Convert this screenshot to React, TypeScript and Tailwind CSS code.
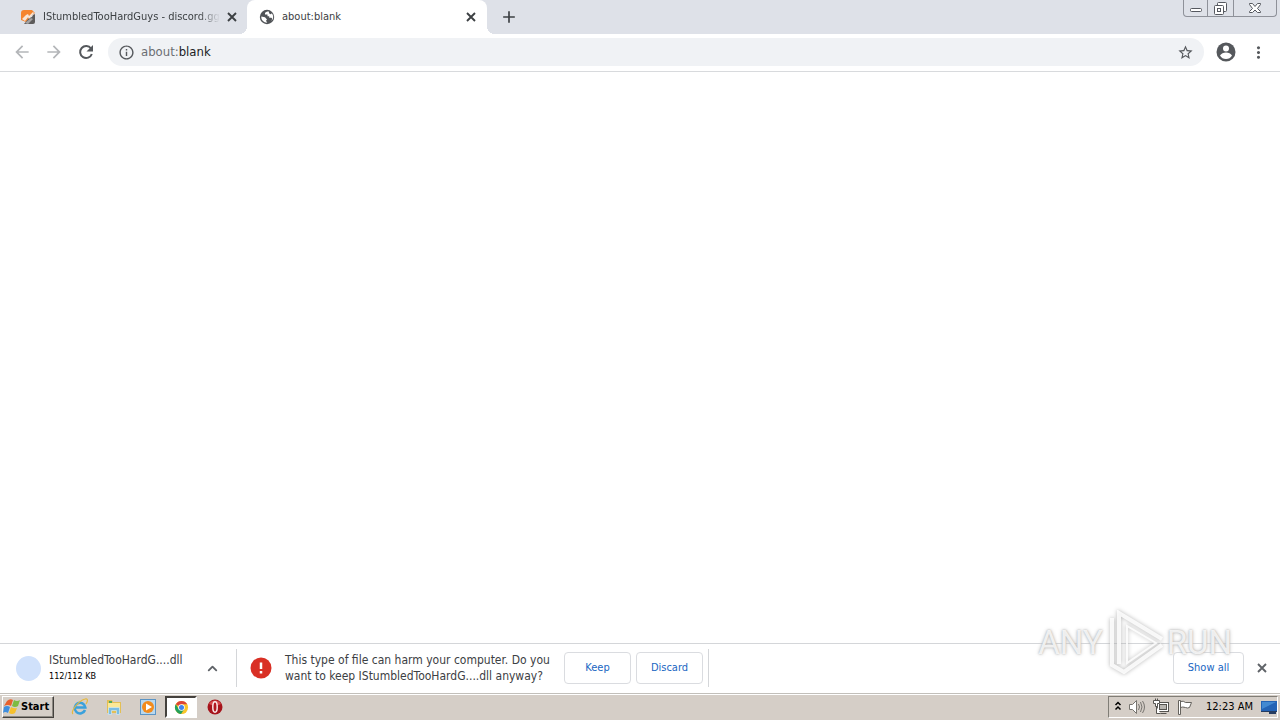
import type { ReactNode } from "react";
import { ChevronUp } from "lucide-react";
import { MdArrowBack, MdArrowForward, MdMoreVert, MdStarBorder, MdAdd, MdInfoOutline } from "react-icons/md";

const UI_FONT = "font-['DejaVu_Sans_Condensed','DejaVu_Sans',sans-serif]";

function SiteIcon() {
    return (
        <svg viewBox="0 0 16 16" className="h-4 w-4 shrink-0">
            <path d="M1 4q0-3 3-3h8l3 3-4 3-5 6-5-2z" fill="#f5852f" />
            <path d="M15 5v8q0 2-2 2H4l5-6 3-1 1-2z" fill="#5d5b5b" />
            <path d="M2 10l4-4 2-1 1 2-4 5zM8 8l5-5 1 1-5 6z" fill="#f7e6d8" />
            <path d="M5 14l6-5 2 1-5 5z" fill="#a5a3a3" />
        </svg>
    );
}

function GlobeIcon() {
    return (
        <svg viewBox="0 0 16 16" className="h-4 w-4 shrink-0">
            <circle cx="8" cy="8" r="7.200" fill="#505357" />
            <path d="M9.500 2.300c-2.500.2-4 1.700-3.500 3.200h2.500v1.700h1.700v1.600h2.200c1 .5.800 2-.2 3.200 2.500-2 2.600-5.500.6-7.800-.7 1.300-1.700 1-2.300.5z" fill="white" />
            <path d="M2.300 7.500 6 8.300l2 2.200-1 1.300 1.300 2C4.500 13.500 2 11 2.300 7.500z" fill="white" />
        </svg>
    );
}

function CloseIcon() {
    return (
        <svg viewBox="0 0 16 16" className="h-4 w-4" stroke="currentColor" strokeWidth="1.900">
            <path d="M4 4l8 8M12 4l-8 8" />
        </svg>
    );
}

function ReloadIcon() {
    return (
        <svg viewBox="0 0 20 20" className="h-5 w-5" fill="none" stroke="currentColor" strokeWidth="2">
            <path d="M15 6.500A6 6 0 1 0 15.800 12" />
            <path d="M17 3v6.500h-6.500z" fill="currentColor" stroke="none" />
        </svg>
    );
}

function ProfileIcon() {
    return (
        <svg viewBox="0 0 20 20" className="h-5 w-5">
            <circle cx="10" cy="10" r="9.500" fill="#55585c" />
            <circle cx="10" cy="6.500" r="3" fill="white" />
            <path d="M4 13.500q2-3 6-3t6 3q-2 3.500-6 3.500t-6-3.500z" fill="white" />
        </svg>
    );
}

function TabStrip() {
    return (
        <header className="flex h-[34px] bg-[#dee1e8]">
            <div className="flex w-[247px] items-center pl-5 pr-[7px]">
                <SiteIcon />
                <span className="ml-[7px] w-[177px] overflow-hidden whitespace-nowrap text-[11px] text-[#3c4043] [mask-image:linear-gradient(to_right,black_88%,transparent)]">
                    IStumbledTooHardGuys - discord.gg
                </span>
                <button aria-label="Close tab" className="ml-1 text-[#3c4043]"><CloseIcon /></button>
            </div>
            <div className="relative flex w-60 items-center rounded-t-lg bg-white pl-3 pr-2">
                <span className="absolute -left-2 bottom-0 h-2 w-2 bg-[radial-gradient(circle_at_0_0,transparent_8px,white_8px)]" />
                <span className="absolute -right-2 bottom-0 h-2 w-2 bg-[radial-gradient(circle_at_100%_0,transparent_8px,white_8px)]" />
                <GlobeIcon />
                <span className="ml-[7px] flex-1 text-[11px] text-[#3c4043]">about:blank</span>
                <button aria-label="Close tab" className="text-[#3c4043]"><CloseIcon /></button>
            </div>
            <button aria-label="New tab" className="ml-3 text-[#3c4043]"><MdAdd size={20} /></button>
            <div className="ml-auto mr-[3px] flex h-[17px] overflow-hidden rounded-b border border-t-0 border-[#8e9199] text-[#55585f]">
                <button aria-label="Minimize" className="flex w-6 justify-center border-r border-[#8e9199]">
                    <svg viewBox="0 0 24 17" className="h-[17px] w-6 shrink-0" fill="white" stroke="currentColor">
                        <rect x="6.500" y="8.500" width="11" height="3" rx="1" />
                    </svg>
                </button>
                <button aria-label="Restore" className="flex w-[26px] justify-center border-r border-[#8e9199]">
                    <svg viewBox="0 0 24 17" className="h-[17px] w-6 shrink-0" fill="white" stroke="currentColor">
                        <rect x="8.500" y="2.500" width="9" height="9" rx="1" />
                        <rect x="5.500" y="5.500" width="9" height="9" rx="1" />
                        <rect x="8.500" y="8.500" width="3" height="3" />
                    </svg>
                </button>
                <button aria-label="Close" className="flex w-[42px] justify-center">
                    <svg viewBox="0 0 24 17" className="h-[17px] w-6 shrink-0" fill="white" stroke="currentColor">
                        <path d="M6.500 3.500h3l2.500 3 2.500-3h3v1l-3 4 3 3v1h-3l-2.500-2.500-2.500 2.500h-3v-1l3-3-3-4z" />
                    </svg>
                </button>
            </div>
        </header>
    );
}

function Toolbar() {
    return (
        <nav className="flex h-[38px] items-center border-b border-[#d8dadd] pb-px text-[#55585c]">
            <button aria-label="Back" className="ml-3 text-[#b4b6b9]"><MdArrowBack size={20} /></button>
            <button aria-label="Forward" className="ml-3 text-[#b4b6b9]"><MdArrowForward size={20} /></button>
            <button aria-label="Reload" className="ml-3"><ReloadIcon /></button>
            <div className="ml-3 flex h-7 flex-1 items-center rounded-full bg-[#f0f2f5] pl-[10px] pr-[10px]">
                <MdInfoOutline size={17} />
                <span className="ml-[6px] flex-1 text-[13px] text-[#6b6e73]">
                    about:<span className="text-[#202124]">blank</span>
                </span>
                <button aria-label="Bookmark this tab"><MdStarBorder size={17} /></button>
            </div>
            <button aria-label="Profile" className="ml-3"><ProfileIcon /></button>
            <button aria-label="Menu" className="ml-[13px] mr-3"><MdMoreVert size={19} /></button>
        </nav>
    );
}

function ShelfButton({ children, className }: { children: ReactNode; className: string }) {
    return (
        <button className={`h-8 rounded border border-[#dadce0] text-[11px] text-[#1a66c2] ${className}`}>{children}</button>
    );
}

function DownloadShelf() {
    return (
        <section className="flex h-[50px] items-center border-t border-[#d4d6d9] bg-white pb-px text-[#3c4043]">
            <div className="flex h-[38px] w-[237px] items-center border-r border-[#d4d6d9] pl-4 pr-4">
                <span className="h-[25px] w-[25px] rounded-full bg-[#d0e1fb]" />
                <div className="ml-2 flex-1 whitespace-nowrap">
                    <p className="text-xs leading-4">IStumbledTooHardG....dll</p>
                    <p className="text-[9px] leading-4 text-black">112/112 KB</p>
                </div>
                <button aria-label="Download options" className="text-[#5f6368]"><ChevronUp size={15} strokeWidth={3} /></button>
            </div>
            <div className="flex h-[38px] items-center border-r border-[#d4d6d9] pl-3 pr-[5px]">
                <svg viewBox="0 0 24 24" className="h-6 w-6">
                    <circle cx="12" cy="12" r="10.500" fill="#d93025" />
                    <path d="M12 6.500v6.500M12 15v2.500" stroke="white" strokeWidth="2.500" />
                </svg>
                <p className="ml-3 w-[279px] whitespace-nowrap text-xs leading-4">
                    This type of file can harm your computer. Do you<br />
                    want to keep IStumbledTooHardG....dll anyway?
                </p>
                <ShelfButton className="w-[67px]">Keep</ShelfButton>
                <ShelfButton className="ml-[5px] w-[67px]">Discard</ShelfButton>
            </div>
            <ShelfButton className="ml-auto w-[71px]">Show all</ShelfButton>
            <button aria-label="Close downloads" className="ml-[10px] mr-[10px] text-[#5f6368]"><CloseIcon /></button>
        </section>
    );
}

function WindowsFlag() {
    return (
        <svg viewBox="0 0 18 18" className="h-[18px] w-[18px] shrink-0">
            <path d="M4 3q3-3 6-1L8 8Q5 6 1 8z" fill="#e8602c" />
            <path d="M11 2q3 2 6 0l-2 6q-3 2-6 0z" fill="#7dbb42" />
            <path d="M1 9q3-2 6 0l-2 6q-3-2-5 0z" fill="#3f8ede" />
            <path d="M8 9q3 2 6 1l-2 5q-3 2-6 0z" fill="#f6c02d" />
        </svg>
    );
}

function ExplorerIcon() {
    return (
        <svg viewBox="0 0 18 18" className="h-[18px] w-[18px]">
            <path d="M14 12a5.300 5.300 0 1 1 .3-2.500H5" fill="none" stroke="#3aa1dc" strokeWidth="2.600" />
            <path d="M2 16C-1 14 7 3 14 1c3-1 3 2 1 5" fill="none" stroke="#e6b83c" strokeWidth="1.200" />
        </svg>
    );
}

function FolderIcon() {
    return (
        <svg viewBox="0 0 18 18" className="h-[18px] w-[18px]">
            <path d="M2 2h5l1 2h8v11H2z" fill="#e3bf55" />
            <path d="M3 5h12v7H3z" fill="#fbe896" />
            <path d="M4 3h3v2H4z" fill="#51a85e" />
            <path d="M3.500 16.500v-6q0-1 1-1h9q1 0 1 1v6h-3v-4h-5v4z" fill="#79bde3" stroke="#d9f0fb" strokeWidth=".6" />
        </svg>
    );
}

function MediaIcon() {
    return (
        <svg viewBox="0 0 18 18" className="h-[18px] w-[18px]">
            <rect x="1.500" y="1.500" width="15" height="15" fill="#b9d8ee" stroke="#5b94c5" />
            <circle cx="9" cy="9" r="6" fill="#f38b1c" />
            <path d="M7 5.500 13 9l-6 3.500z" fill="white" />
        </svg>
    );
}

function ChromeIcon() {
    return (
        <svg viewBox="0 0 16 16" className="h-[15px] w-[15px]">
            <circle cx="8" cy="8" r="7" fill="#f9c52a" />
            <path d="M8 8 1.900 4.500A7 7 0 0 1 14.100 4.500H8z" fill="#dd4437" />
            <path d="M1.900 4.500A7 7 0 0 0 7.500 15L11 9.500 5 9.500z" fill="#22a05c" />
            <circle cx="8" cy="8" r="3.500" fill="white" />
            <circle cx="8" cy="8" r="2.700" fill="#4284ed" />
        </svg>
    );
}

function OperaIcon() {
    return (
        <svg viewBox="0 0 16 16" className="h-4 w-4">
            <circle cx="8" cy="8" r="7.500" fill="#a6131b" />
            <path d="M2 5a7 7 0 0 1 12 0Q8 8 2 5" fill="#d94a4d" />
            <ellipse cx="8" cy="8" rx="2.200" ry="5.200" fill="#b3161e" stroke="#f9e9e9" strokeWidth="1.500" />
        </svg>
    );
}

function Tray() {
    return (
        <div className="ml-auto mr-[2px] flex h-[22px] items-center border border-b-white border-l-[#807d76] border-r-white border-t-[#807d76] pl-1">
            <button aria-label="Show hidden icons">
                <svg viewBox="0 0 10 12" className="h-3 w-[10px]" fill="none" stroke="black" strokeWidth="1.500">
                    <path d="M2.500 4 5 1.500 7.500 4M2.500 8.500 5 6l2.500 2.500" />
                </svg>
            </button>
            <svg viewBox="0 0 18 18" className="ml-[5px] h-[18px] w-[18px]" fill="none" stroke="#77746f">
                <path d="M1.500 6.500h3l4-4v13l-4-4h-3z" fill="white" />
                <path d="M10.500 6q2 3 0 6M12.500 4q3 5 0 10M14.500 3q4 6 0 12" />
            </svg>
            <svg viewBox="0 0 18 18" className="ml-[6px] h-[18px] w-[18px]" fill="white" stroke="#55534f">
                <rect x="5.500" y="4.500" width="11" height="9" />
                <rect x="7.500" y="6.500" width="7" height="5" fill="#b8b5b0" />
                <path d="M8.500 15.500h6M1.500 2.500h6v3h-2v3h-2v-3h-2zM4.500 8.500v7h4M3.500 .5v2M5.500 .5v2" />
            </svg>
            <svg viewBox="0 0 18 18" className="ml-[6px] h-[18px] w-[18px]" fill="white" stroke="#65625d">
                <path d="M2.500 2.500h2v14h-2zM4.500 3.500q3-1 5 1h6l-2 5q-2 1-4 0-3-1-5 0z" />
            </svg>
            <time className="ml-3 w-[51px] whitespace-nowrap text-[11px] text-black">12:23 AM</time>
            <svg viewBox="0 0 16 16" className="ml-1 h-4 w-4">
                <path d="M0 2h16v10H0z" fill="#2463b5" />
                <path d="M1 3h14L1 10z" fill="#4389d1" />
                <path d="M0 12h16v1H0zM8 13h7v2H8z" fill="#263c60" />
            </svg>
        </div>
    );
}

function Taskbar() {
    return (
        <footer className="flex h-[27px] items-center border-t border-[#c2bfba] bg-[#d5cec7] pl-[2px] shadow-[inset_0_1px_0_white]">
            <button className="flex h-[22px] w-[52px] items-center border border-b-[#44413d] border-l-white border-r-[#44413d] border-t-white text-[11px] font-bold text-black shadow-[inset_-1px_-1px_0_#8d8982]">
                <WindowsFlag />Start
            </button>
            <div className="ml-[9px] flex items-center">
                <button aria-label="Internet Explorer" className="flex w-[34px] justify-center"><ExplorerIcon /></button>
                <button aria-label="Windows Explorer" className="flex w-[34px] justify-center"><FolderIcon /></button>
                <button aria-label="Media Player" className="flex w-[34px] justify-center"><MediaIcon /></button>
                <button aria-label="Chrome" className="flex h-[22px] w-[32px] items-center justify-center border-2 border-b-white border-l-[#44413d] border-r-white border-t-[#44413d] bg-white"><ChromeIcon /></button>
                <button aria-label="Opera" className="flex w-9 justify-center"><OperaIcon /></button>
            </div>
            <Tray />
        </footer>
    );
}

function Watermark() {
    return (
        <div className="pointer-events-none absolute bottom-[46px] right-12 flex h-16 items-center font-['Liberation_Sans_Narrow','Roboto',sans-serif] text-[33px] leading-none text-white/80 [text-shadow:0_0_2px_#aaa,0_0_4px_#ccc]">
            <span>ANY</span>
            <svg viewBox="0 0 60 64" className="ml-1 h-16 w-[60px] drop-shadow-[0_0_2px_#aaa]" fill="none" stroke="white" strokeOpacity=".85" strokeWidth="4">
                <path d="M5 8v47l12 7 38-27" />
                <path d="M12 54V3l43 26" />
                <path d="M20 50V16l29 17-29 20z" strokeWidth="2" />
            </svg>
            <span>RUN</span>
        </div>
    );
}

export default function App() {
    return (
        <div className={`relative flex min-h-screen flex-col bg-white ${UI_FONT}`}>
            <TabStrip />
            <Toolbar />
            <main className="flex-1" />
            <DownloadShelf />
            <Taskbar />
            <Watermark />
        </div>
    );
}
